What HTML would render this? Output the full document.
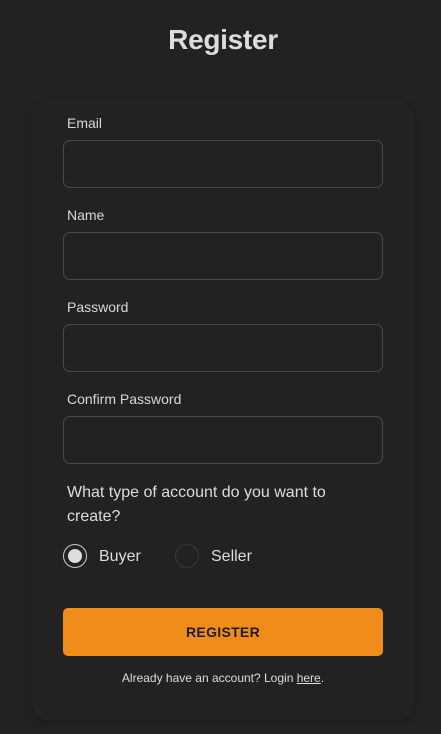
<!DOCTYPE html>
<html><head><style>
html,body{margin:0;padding:0;background:#222;width:441px;height:734px;overflow:hidden;font-family:"Liberation Sans",sans-serif;color:#ddd}
h1{position:absolute;top:22px;left:0;width:446px;text-align:center;margin:0;font-size:28px;font-weight:bold;color:#ddd;line-height:36px;letter-spacing:-0.3px}
.card{position:absolute;left:31px;top:100px;width:383px;height:620px;background:#222;border-radius:18px;box-shadow:0 3px 8px rgba(0,0,0,.18)}
.lbl{position:absolute;left:67px;font-size:14px;color:#d8d8d8;line-height:16px}
.inp{position:absolute;left:63px;width:318px;height:46px;border:1px solid #4a4a4a;border-radius:7px}
.q{position:absolute;left:67px;top:481px;font-size:16px;line-height:24px;color:#ddd;width:300px}
.radio{position:absolute;top:544px;width:22px;height:22px;border-radius:50%;border:1px solid #3a3a3a}
.rl{position:absolute;top:548px;font-size:16px;line-height:18px;color:#ddd}
.btn{position:absolute;left:63px;top:608px;width:320px;height:48px;background:#f08c19;border-radius:5px;text-align:center;line-height:48px;font-size:14px;font-weight:bold;color:#1e1e1e;letter-spacing:.3px}
.ft{position:absolute;top:670px;left:0;width:446px;text-align:center;font-size:12px;color:#ddd;line-height:16px}
</style></head><body>
<h1>Register</h1>
<div class="card"></div>
<div class="lbl" style="top:115px">Email</div><div class="inp" style="top:140px"></div>
<div class="lbl" style="top:207px">Name</div><div class="inp" style="top:232px"></div>
<div class="lbl" style="top:299px">Password</div><div class="inp" style="top:324px"></div>
<div class="lbl" style="top:391px">Confirm Password</div><div class="inp" style="top:416px"></div>
<div class="q">What type of account do you want to create?</div>
<div class="radio" style="left:63px;border:1px solid #ccc"><div style="position:absolute;left:4px;top:4px;width:14px;height:14px;border-radius:50%;background:#ddd"></div></div>
<div class="rl" style="left:99px">Buyer</div>
<div class="radio" style="left:175px"></div>
<div class="rl" style="left:211px">Seller</div>
<div class="btn">REGISTER</div>
<div class="ft">Already have an account? Login <u>here</u>.</div>
</body></html>
